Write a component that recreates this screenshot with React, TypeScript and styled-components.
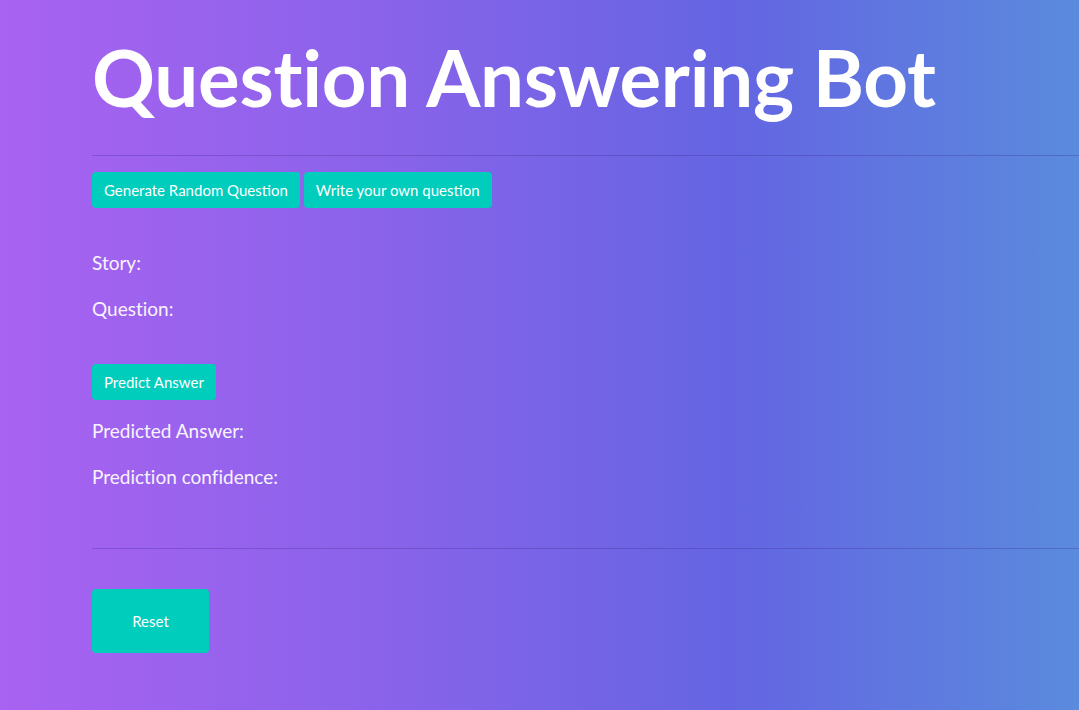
import React from "react";
import styled, { createGlobalStyle } from "styled-components";

const Global = createGlobalStyle`
  html, body {
    margin: 0;
    padding: 0;
    height: 100%;
    overflow: hidden;
  }
  body {
    background: linear-gradient(90deg, #a962f1 0%, #8a63ea 35%, #6465e2 68%, #5a8bdd 100%);
    font-family: Lato, "Liberation Sans", sans-serif;
    color: #fafafa;
    font-variant-ligatures: none;
  }
`;

const Page = styled.main`
  display: flex;
  flex-direction: column;
  align-items: flex-start;
  margin-left: 92px;
  padding-top: 29px;
  width: calc(100vw - 92px);
  min-height: 100vh;
  box-sizing: border-box;
`;

const Title = styled.h1`
  margin: 0;
  font-family: Lato, "Liberation Sans", sans-serif;
  font-weight: 700;
  font-size: 78px;
  letter-spacing: -0.25px;
  line-height: 96px;
  color: #ffffff;
  white-space: nowrap;
  font-variant-ligatures: none;
`;

const Divider = styled.hr<{ $gap: number }>`
  align-self: stretch;
  margin: ${(p) => p.$gap}px 0 0 0;
  border: none;
  height: 1px;
  background: rgba(60, 40, 140, 0.3);
`;

const ButtonRow = styled.div<{ $gap: number }>`
  display: flex;
  gap: 4px;
  margin-top: ${(p) => p.$gap}px;
`;

const Button = styled.button<{ $tall?: boolean; $width?: number }>`
  display: inline-flex;
  align-items: center;
  justify-content: center;
  box-sizing: border-box;
  height: ${(p) => (p.$tall ? 64 : 36)}px;
  ${(p) => (p.$width ? `width: ${p.$width}px;` : "")}
  padding: 0 12px;
  border: none;
  border-radius: 4px;
  background: #00cdbc;
  color: #ffffff;
  font-family: Lato, "Liberation Sans", sans-serif;
  font-size: 15px;
  cursor: pointer;
`;

const Label = styled.p<{ $gap: number }>`
  margin: ${(p) => p.$gap}px 0 0 0;
  font-size: 19px;
  line-height: 30px;
  color: #f8f4ff;
`;

export default function App() {
  return (
    <>
      <Global />
      <Page>
        <Title>Question Answering Bot</Title>
        <Divider $gap={30} />
        <ButtonRow $gap={16}>
          <Button>Generate Random Question</Button>
          <Button>Write your own question</Button>
        </ButtonRow>
        <Label $gap={40}>Story:</Label>
        <Label $gap={16}>Question:</Label>
        <ButtonRow $gap={40}>
          <Button>Predict Answer</Button>
        </ButtonRow>
        <Label $gap={16}>Predicted Answer:</Label>
        <Label $gap={16}>Prediction confidence:</Label>
        <Divider $gap={56} />
        <ButtonRow $gap={40}>
          <Button $tall $width={117}>Reset</Button>
        </ButtonRow>
      </Page>
    </>
  );
}
